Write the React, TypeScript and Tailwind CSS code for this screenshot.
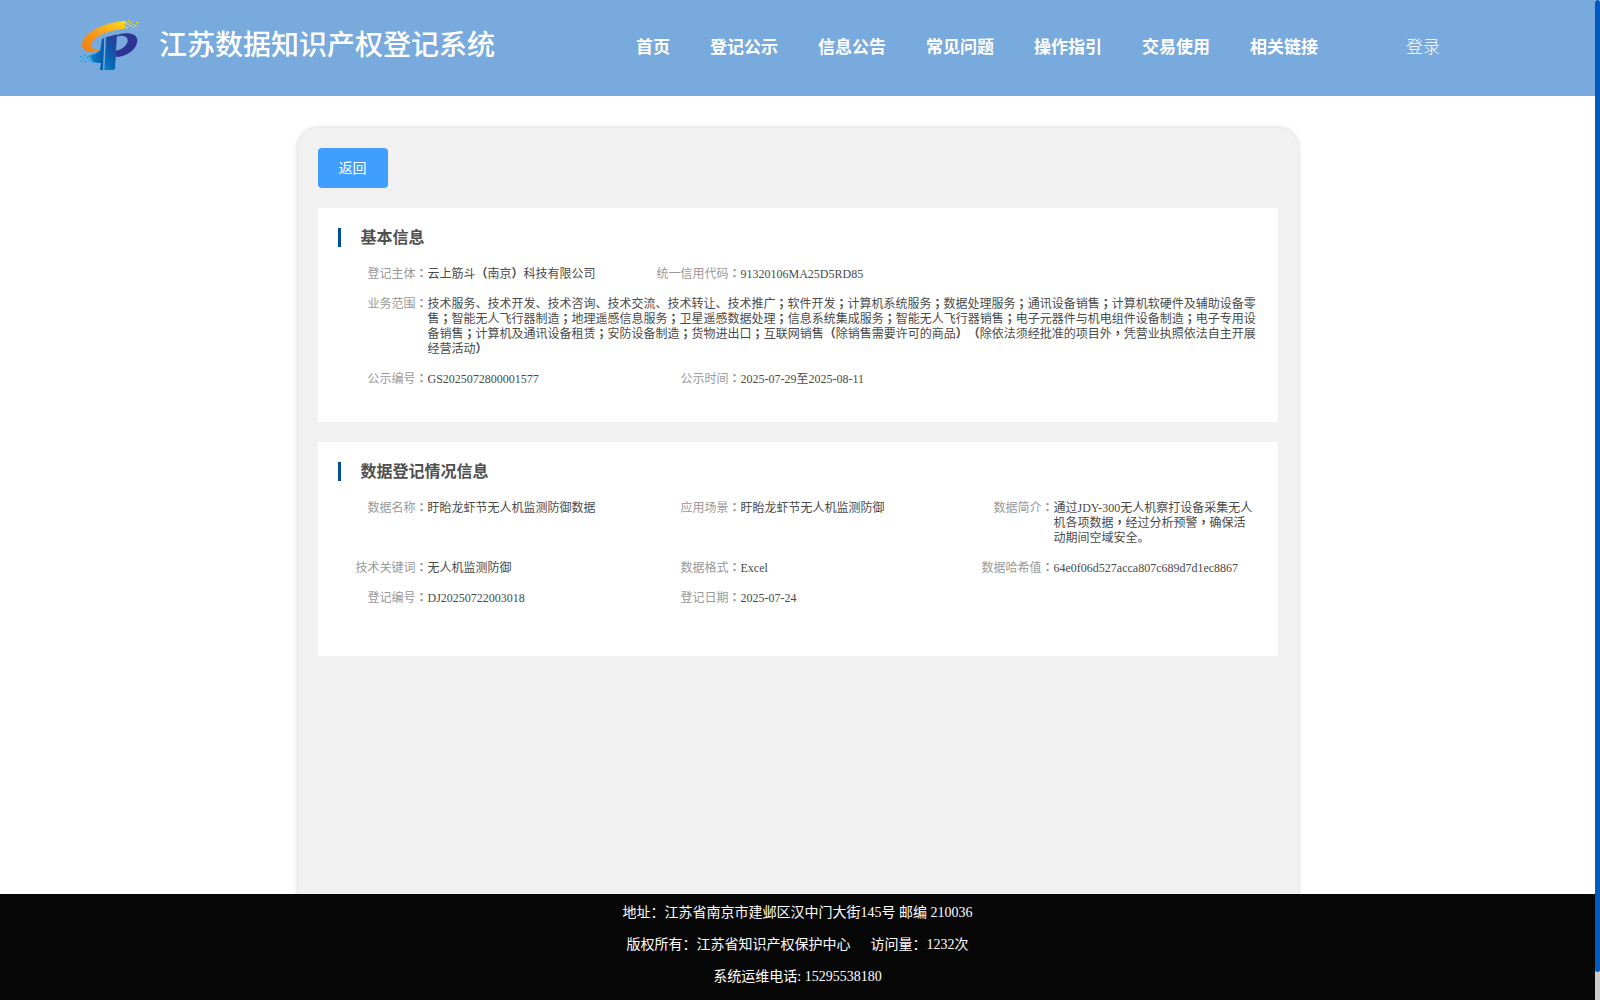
import React from 'react';

type Field = {
  label: string;
  value: string;
  wide?: boolean;
};

const navItems = ['首页', '登记公示', '信息公告', '常见问题', '操作指引', '交易使用', '相关链接'];

const basicInfo: Field[][] = [
  [
    { label: '登记主体', value: '云上筋斗（南京）科技有限公司' },
    { label: '统一信用代码', value: '91320106MA25D5RD85' },
  ],
  [
    {
      label: '业务范围',
      value:
        '技术服务、技术开发、技术咨询、技术交流、技术转让、技术推广；软件开发；计算机系统服务；数据处理服务；通讯设备销售；计算机软硬件及辅助设备零售；智能无人飞行器制造；地理遥感信息服务；卫星遥感数据处理；信息系统集成服务；智能无人飞行器销售；电子元器件与机电组件设备制造；电子专用设备销售；计算机及通讯设备租赁；安防设备制造；货物进出口；互联网销售（除销售需要许可的商品）（除依法须经批准的项目外，凭营业执照依法自主开展经营活动）',
      wide: true,
    },
  ],
  [
    { label: '公示编号', value: 'GS2025072800001577' },
    { label: '公示时间', value: '2025-07-29至2025-08-11' },
  ],
];

const dataInfo: Field[][] = [
  [
    { label: '数据名称', value: '盱眙龙虾节无人机监测防御数据' },
    { label: '应用场景', value: '盱眙龙虾节无人机监测防御' },
    { label: '数据简介', value: '通过JDY-300无人机察打设备采集无人机各项数据，经过分析预警，确保活动期间空域安全。' },
  ],
  [
    { label: '技术关键词', value: '无人机监测防御' },
    { label: '数据格式', value: 'Excel' },
    { label: '数据哈希值', value: '64e0f06d527acca807c689d7d1ec8867' },
  ],
  [
    { label: '登记编号', value: 'DJ20250722003018' },
    { label: '登记日期', value: '2025-07-24' },
  ],
];

// Punctuation is set in the TC face, which centres it in the cell
const Centered = ({ text }: { text: string }) => (
  <>
    {text.split(/([：；，（）])/).map((part, i) =>
      i % 2 === 1 ? (
        <span key={i} className="font-['Liberation_Serif','Noto_Sans_CJK_TC',serif] font-bold">
          {part}
        </span>
      ) : (
        part
      )
    )}
  </>
);

const Logo = () => (
  <svg viewBox="0 0 240 210" className="h-[70px] w-[80px] shrink-0">
    <defs>
      <linearGradient id="orange" x1="0" y1="1" x2="1" y2="0">
        <stop offset="0" stopColor="#ee7d0c" />
        <stop offset="0.45" stopColor="#f7991a" />
        <stop offset="1" stopColor="#fddc1c" />
      </linearGradient>
      <linearGradient id="blue" x1="0" y1="0" x2="1" y2="0.3">
        <stop offset="0" stopColor="#0f9ee0" />
        <stop offset="1" stopColor="#075bab" />
      </linearGradient>
      <linearGradient id="stem" x1="0" y1="1" x2="0.5" y2="0">
        <stop offset="0" stopColor="#0584cc" />
        <stop offset="0.5" stopColor="#0a5dac" />
        <stop offset="1" stopColor="#27419c" />
      </linearGradient>
    </defs>
    <path
      d="M160 33 C108 37 58 61 41 87 C28 108 41 126 66 125 L90 122 C76 119 63 117 64 105 C65 84 101 63 162 56 L168 50 L164 44 L170 38Z"
      fill="url(#orange)"
    />
    <path
      d="M161 33h7v4h-7z M173 30h5v4h-5z M180 36h6v4h-6z M170 40h6v4h-6z M188 42h5v4h-5z M198 36h7v4h-7z M177 45h6v4h-6z M168 51h5v4h-5z M186 50h6v4h-6z M195 46h5v4h-5z"
      fill="#fddc20"
    />
    <path d="M103 83 L99 180 L90 180 L93 158 C83 160 71 157 63 153 L69 149 L58 146 L65 141 L48 139 C71 134 86 127 91 119 L95 88Z" fill="url(#blue)" />
    <path
      d="M30 138h7v4h-7z M42 135h6v4h-6z M49 142h6v4h-6z M38 145h6v4h-6z M55 149h6v4h-6z M32 151h5v4h-5z M44 153h6v4h-6z M65 154h7v4h-7z"
      fill="#16a3df"
    />
    <path
      d="M139 77 C165 64 203 69 202 92 C200 120 169 140 136 141 L137 123 C158 117 175 104 173 89 C171 77 155 75 139 80Z"
      fill="#2d3494"
    />
    <path d="M108 82 L141 73 L135 176 Q133 180 127 180 L103 180Z" fill="url(#stem)" />
  </svg>
);

const FieldRow = ({ fields }: { fields: Field[] }) => (
  <div className="mb-[15px] flex">
    {fields.map((field, i) => (
      <div
        key={field.label}
        className={`flex shrink-0 ${field.wide ? 'w-[920px]' : i === 2 ? 'w-[294px]' : 'w-[313px]'}`}
      >
        <span className="w-[90px] shrink-0 text-right text-[#999]">
          <Centered text={`${field.label}：`} />
        </span>
        <span className="min-w-0 flex-1 text-[#4a4a4a]">
          <Centered text={field.value} />
        </span>
      </div>
    ))}
  </div>
);

const InfoCard = ({ title, rows }: { title: string; rows: Field[][] }) => (
  <section className="mb-5 h-[214px] bg-white p-5">
    <h2 className="mb-5 h-[19px] border-l-[3px] border-[#00509a] pl-5 text-base leading-5 font-bold text-[#505050]">
      {title}
    </h2>
    <div className="text-xs leading-[15px] [text-spacing-trim:space-all]">
      {rows.map((fields) => (
        <FieldRow key={fields[0].label} fields={fields} />
      ))}
    </div>
  </section>
);

const App: React.FC = () => {
  return (
    <div className="flex h-screen overflow-hidden bg-white font-['Liberation_Serif','Noto_Sans_CJK_SC',serif]">
      <div className="flex min-w-0 flex-1 flex-col">
        <header className="flex h-24 shrink-0 items-start bg-[#79aadd] pl-[70px] text-white">
          <div className="pt-[10px]">
            <Logo />
          </div>
          <h1 className="w-[486px] pt-[26px] pl-[9px] text-[28px] leading-10 font-medium">江苏数据知识产权登记系统</h1>
          <nav className="flex gap-10 pt-9 text-[17px] leading-6 font-bold whitespace-nowrap">
            {navItems.map((item) => (
              <a key={item}>{item}</a>
            ))}
          </nav>
          <a className="pt-9 pl-[88px] text-[17px] leading-6 font-light">登录</a>
        </header>

        <main className="min-h-0 flex-1 overflow-hidden pt-8">
          <div className="mx-auto h-[1000px] w-[1000px] rounded-[20px] bg-[#f1f1f1] p-5 shadow-[0_0_5px_rgba(0,0,0,0.2)]">
            <button className="mb-5 block h-10 w-[70px] rounded bg-[#409eff] pt-px text-sm text-white">返回</button>
            <InfoCard title="基本信息" rows={basicInfo} />
            <InfoCard title="数据登记情况信息" rows={dataInfo} />
          </div>
        </main>

        <footer className="h-[106px] shrink-0 bg-[#070707] pt-[3px] text-center text-sm leading-8 text-white">
          <p>地址：江苏省南京市建邺区汉中门大街145号 邮编 210036</p>
          <p>
            版权所有：江苏省知识产权保护中心
            <span className="ml-5">访问量：1232次</span>
          </p>
          <p>系统运维电话: 15295538180</p>
        </footer>
      </div>

      {/* scrollbar track and thumb */}
      <div className="w-[5px] shrink-0 bg-[#ccc]">
        <div className="h-[972px] rounded-[3px] bg-[#005ac2]" />
      </div>
    </div>
  );
};

export default App;
